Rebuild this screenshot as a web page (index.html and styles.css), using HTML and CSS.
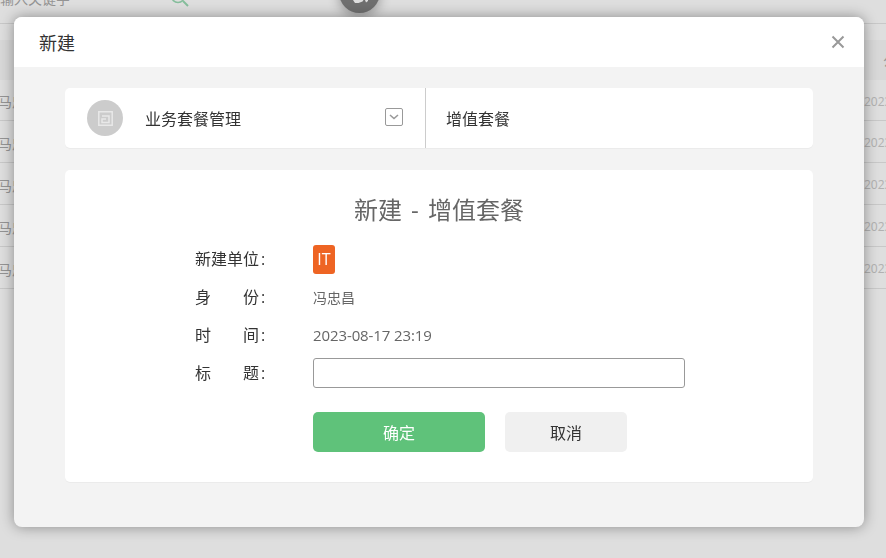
FILE: index.html
```html
<!DOCTYPE html>
<html lang="zh-CN">
<head>
<meta charset="utf-8">
<title>新建</title>
<link rel="stylesheet" href="styles.css">
</head>
<body>
<div class="page">
  <div class="search-bar">
    <span class="search-text">请输入关键字</span>
    <svg class="search-icon" width="20" height="20" viewBox="0 0 20 20"><circle cx="8" cy="8" r="6.5" fill="none" stroke="#9adbb4" stroke-width="1.5"/><path d="M13 13l5 5" stroke="#9adbb4" stroke-width="2" fill="none"/></svg>
  </div>
  <div class="table-head"><span></span><span class="cell">公告</span></div>
  <div class="table-row"><span class="cell name">马忠昌</span><span class="cell date">2023-08-17</span></div>
  <div class="table-row"><span class="cell name">马忠昌</span><span class="cell date">2023-08-17</span></div>
  <div class="table-row"><span class="cell name">马忠昌</span><span class="cell date">2023-08-17</span></div>
  <div class="table-row"><span class="cell name">马忠昌</span><span class="cell date">2023-08-17</span></div>
  <div class="table-row"><span class="cell name">马忠昌</span><span class="cell date">2023-08-17</span></div>
</div>
<div class="float-btn">
  <svg width="41" height="41" viewBox="0 0 41 41"><path d="M14 28h10.500l-1 1.500-4 1.500h-3.500zM26 28h3v1l-2 1.500z" fill="#fff"/></svg>
</div>
<div class="scrim"></div>
<div class="modal">
  <header class="modal-head">
    <h1 class="modal-title">新建</h1>
    <svg class="close" width="14" height="14" viewBox="0 0 14 14"><path d="M1.500 1.500l11 11M12.500 1.500l-11 11" stroke="#999" stroke-width="2" fill="none"/></svg>
  </header>
  <div class="modal-body">
    <section class="card type-card">
      <div class="type-left">
        <span class="type-avatar">
          <svg width="15" height="15" viewBox="0 0 15 15"><path d="M.8.8h13.400v13.400H.8zM4 5h7v6.500H4V8h4" fill="none" stroke="#e8e8e8" stroke-width="1.500"/></svg>
        </span>
        <span class="type-name">业务套餐管理</span>
        <span class="type-toggle">
          <svg width="10" height="6" viewBox="0 0 10 6"><path d="M1 1l4 3.500L9 1" fill="none" stroke="#999" stroke-width="1.600"/></svg>
        </span>
      </div>
      <div class="type-right">增值套餐</div>
    </section>
    <section class="card form-card">
      <h2 class="form-title">新建 - 增值套餐</h2>
      <div class="form-rows">
        <div class="form-row">
          <span class="label"><span class="label-text"><i>新</i><i>建</i><i>单</i><i>位</i></span><span class="colon">:</span></span>
          <span class="badge">IT</span>
        </div>
        <div class="form-row">
          <span class="label"><span class="label-text"><i>身</i><i>份</i></span><span class="colon">:</span></span>
          <span class="value">冯忠昌</span>
        </div>
        <div class="form-row">
          <span class="label"><span class="label-text"><i>时</i><i>间</i></span><span class="colon">:</span></span>
          <span class="value value-time">2023-08-17 23:19</span>
        </div>
        <div class="form-row">
          <span class="label"><span class="label-text"><i>标</i><i>题</i></span><span class="colon">:</span></span>
          <input class="input" type="text" aria-label="标题">
        </div>
      </div>
      <div class="actions">
        <button class="btn btn-ok" type="button">确定</button>
        <button class="btn btn-cancel" type="button">取消</button>
      </div>
    </section>
  </div>
</div>
</body>
</html>
```
FILE: styles.css
```css
* { box-sizing: border-box; }
html, body { margin: 0; height: 100%; overflow: hidden; background: #fff; }
body { font-family: "Open Sans", "Noto Sans CJK SC", sans-serif; color: #333; }

.page { width: 886px; height: 558px; overflow: hidden; color: #aaa; font-size: 14px; }
.search-bar { height: 24px; border-bottom: 1px solid #e6e6e6; position: relative; }
.search-text { position: absolute; left: -14px; top: -11px; line-height: 20px; color: #aaa; white-space: nowrap; }
.search-icon { position: absolute; left: 170px; top: -12px; }
.table-head { height: 40px; margin-top: 16px; background: #f8f8f8; display: grid; grid-template-columns: 883px 60px; align-items: center; }
.table-row { height: 42px; padding-top: 2px; border-bottom: 1px solid #e6e6e6; display: grid; grid-template-columns: 864px 100px; align-items: center; }
.table-head + .table-row { height: 41px; }
.cell { white-space: nowrap; }
.name { margin-left: -2px; }
.date { font-size: 12px; color: #ccc; }

.float-btn { position: absolute; left: 339px; top: -28px; width: 41px; height: 41px; border-radius: 50%; background: #808080; box-shadow: 0 4px 12px rgba(0,0,0,.3); }
.float-btn svg { display: block; }
.scrim { position: fixed; inset: 0; background: rgba(0,0,0,.13); }

.modal { position: absolute; left: 14px; top: 17px; width: 850px; height: 510px; background: #f3f3f3; border-radius: 8px; overflow: hidden; box-shadow: 0 0 14px rgba(0,0,0,.38); }
.modal-head { height: 50px; background: #fff; display: flex; align-items: center; justify-content: space-between; padding: 0 19px 0 25px; }
.modal-title { margin: 0; font-size: 18px; font-weight: 400; color: #333; }
.close { display: block; margin-top: -1px; }
.modal-body { padding: 21px 51px 0; display: flex; flex-direction: column; gap: 22px; }
.card { background: #fff; border-radius: 5px; box-shadow: 0 1px 0 #ebebeb; }

.type-card { height: 60px; display: flex; }
.type-left { width: 361px; flex: none; display: flex; align-items: center; padding-left: 22px; border-right: 1px solid #ccc; }
.type-avatar { width: 36px; height: 36px; border-radius: 50%; background: #ccc; display: flex; align-items: center; justify-content: center; flex: none; }
.type-name { font-size: 16px; margin-left: 22px; flex: 1; color: #333; }
.type-toggle { width: 18px; height: 18px; margin-right: 22px; margin-top: -2px; border: 1px solid #999; border-radius: 2px; display: flex; align-items: center; justify-content: center; }
.type-right { padding-left: 20px; display: flex; align-items: center; font-size: 16px; color: #333; }

.form-card { height: 312px; padding-left: 130px; }
.form-title { margin: 24px 0 0 -130px; font-size: 24px; line-height: 32px; font-weight: 400; text-align: center; word-spacing: 3px; color: #666; }
.form-rows { margin-top: 18px; display: flex; flex-direction: column; gap: 8px; }
.form-row { height: 30px; display: flex; align-items: center; }
.label { width: 118px; flex: none; display: flex; font-size: 16px; line-height: 24px; color: #333; }
.label-text { width: 64px; display: flex; justify-content: space-between; }
.label-text i { font-style: normal; }
.colon { margin-left: 2px; }
.badge { width: 22px; height: 29px; background: #ee6423; color: #fff; border-radius: 3px; display: flex; align-items: center; justify-content: center; font-size: 16px; }
.value { font-size: 14px; color: #666; }
.value-time { font-size: 15px; letter-spacing: -.1px; }
.input { width: 372px; height: 30px; padding: 0 8px; border: 1px solid #999; border-radius: 3px; background: #fff; }
.actions { margin: 24px 0 0 118px; display: flex; gap: 20px; }
.btn { height: 40px; border: 0; border-radius: 5px; font: inherit; font-size: 16px; }
.btn-ok { width: 172px; background: #5fc27a; color: #fff; }
.btn-cancel { width: 122px; background: #f0f0f0; color: #333; }
```
